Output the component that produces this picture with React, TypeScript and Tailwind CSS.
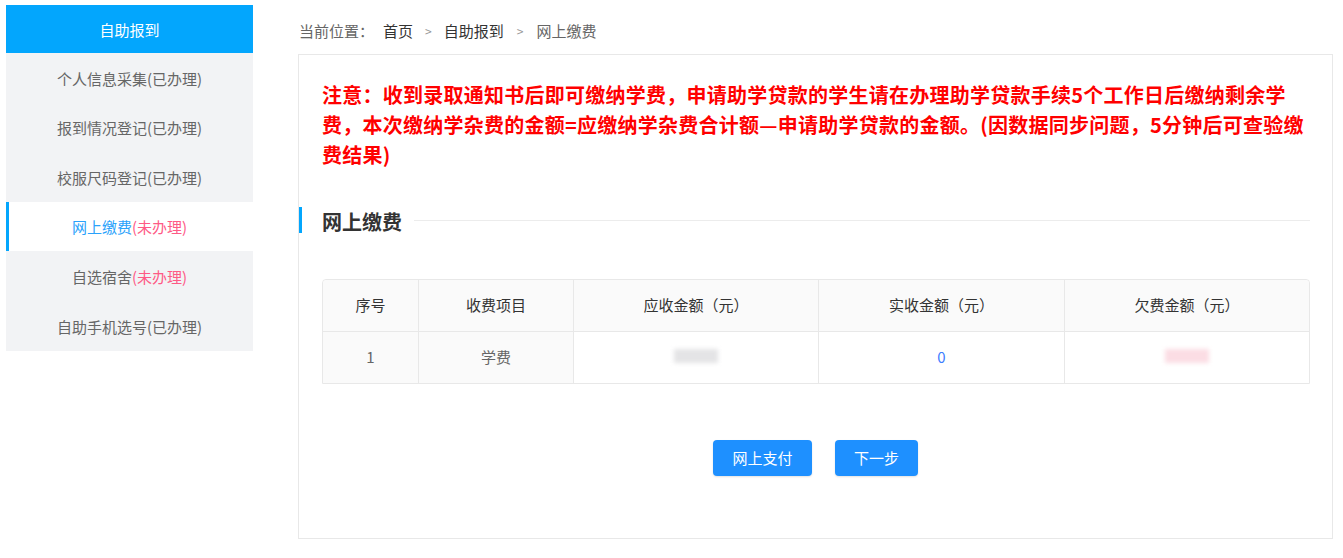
const font = { fontFamily: '"Noto Sans CJK SC", "Noto Sans", sans-serif' };

const menu = [
  { name: "个人信息采集", done: true },
  { name: "报到情况登记", done: true },
  { name: "校服尺码登记", done: true },
  { name: "网上缴费", done: false, active: true },
  { name: "自选宿舍", done: false },
  { name: "自助手机选号", done: true },
];

const Sidebar = () => (
  <aside className="w-[247px] shrink-0">
    <div className="h-[48px] bg-[#03a6fd] text-white text-[15px] flex items-center justify-center pt-[2px]">自助报到</div>
    <ul>
      {menu.map((m) =>
        m.active ? (
          <li key={m.name} className="h-[49.6px] bg-white border-l-[3px] border-[#03a6fd] flex items-center justify-center pr-[3px] pt-[2px] text-[15px] text-[#2aa2fb]">
            {m.name}
            <span className="text-[#fe5a86]">(未办理)</span>
          </li>
        ) : (
          <li key={m.name} className="h-[49.6px] bg-[#f2f3f5] flex items-center justify-center pt-[2px] text-[15px] text-[#666]">
            {m.name}
            {m.done ? <span>(已办理)</span> : <span className="text-[#fe5a86]">(未办理)</span>}
          </li>
        )
      )}
    </ul>
  </aside>
);

const Breadcrumb = () => (
  <div className="h-[49px] flex items-center text-[15px] text-[#666] pl-px pt-[3px]">
    <span>当前位置：</span>
    <span className="ml-[9px] text-[#333]">首页</span>
    <span className="mx-[12px] text-[12px] text-[#999]">&gt;</span>
    <span className="text-[#333]">自助报到</span>
    <span className="mx-[13px] text-[12px] text-[#999]">&gt;</span>
    <span>网上缴费</span>
  </div>
);

const cols = ["w-[96px]", "w-[155px]", "w-[245px]", "w-[246px]", "flex-1"];

const FeeTable = () => (
  <div className="border border-[#e8e8e8] rounded-t-[4px] text-[15px]">
    <div className="flex h-[52px] bg-[#fafafa] text-[#333] border-b border-[#e8e8e8] rounded-t-[4px]">
      {["序号", "收费项目", "应收金额（元）", "实收金额（元）", "欠费金额（元）"].map((h, i) => (
        <div key={h} className={`${cols[i]} flex items-center justify-center ${i < 4 ? "border-r border-[#e8e8e8]" : ""}`}>{h}</div>
      ))}
    </div>
    <div className="flex h-[51px] text-[#666]">
      <div className={`${cols[0]} flex items-center justify-center border-r border-[#e8e8e8] bg-[#fafafa]`}>1</div>
      <div className={`${cols[1]} flex items-center justify-center border-r border-[#e8e8e8] bg-[#fafafa]`}>学费</div>
      <div className={`${cols[2]} flex items-center justify-center border-r border-[#e8e8e8]`}>
        <div className="w-[44px] h-[14px] bg-[#e4e4e6] blur-[2px] -mt-[4px]" />
      </div>
      <div className={`${cols[3]} flex items-center justify-center border-r border-[#e8e8e8] text-[#3d7dff]`}>0</div>
      <div className={`${cols[4]} flex items-center justify-center`}>
        <div className="w-[44px] h-[14px] bg-[#fbdde4] blur-[2px] -mt-[4px]" />
      </div>
    </div>
  </div>
);

export default function App() {
  return (
    <div className="w-[1343px] h-[558px] bg-white flex pl-[6px] pt-[5px]" style={font}>
      <Sidebar />
      <main className="ml-[45px] w-[1035px]">
        <Breadcrumb />
        <section className="h-[485px] border border-[#e8e8e8] pl-[23px] pr-[22px] pt-[25px]">
          <p className="text-[20px] leading-[30px] font-bold text-[#ff0000] tracking-[0.25px] whitespace-nowrap">
            注意：收到录取通知书后即可缴纳学费，申请助学贷款的学生请在办理助学贷款手续5个工作日后缴纳剩余学
            <br />
            费，本次缴纳学杂费的金额=应缴纳学杂费合计额—申请助学贷款的金额。(因数据同步问题，5分钟后可查验缴
            <br />
            费结果)
          </p>
          <div className="relative flex items-center mt-[37px] h-[26px]">
            <div className="absolute -left-[23px] top-0 w-[3px] h-[26px] bg-[#03a6fd]" />
            <h3 className="text-[20px] font-bold text-[#333] leading-[26px] pt-[4px]">网上缴费</h3>
            <div className="flex-1 ml-[12px] h-px bg-[#ececec]" />
          </div>
          <div className="mt-[46px]">
            <FeeTable />
          </div>
          <div className="flex justify-center gap-[23px] mt-[56px] pr-px">
            <button className="w-[99px] h-[36px] rounded-[4px] bg-[#1e90ff] text-white text-[15px] shadow-[0_1px_2px_rgba(0,0,0,0.12)]">网上支付</button>
            <button className="w-[83px] h-[36px] rounded-[4px] bg-[#1e90ff] text-white text-[15px] shadow-[0_1px_2px_rgba(0,0,0,0.12)]">下一步</button>
          </div>
        </section>
      </main>
    </div>
  );
}
